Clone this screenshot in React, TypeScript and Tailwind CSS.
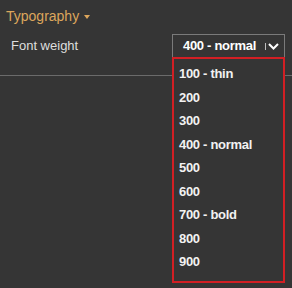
import React from 'react';

const weights = [
  '100 - thin',
  '200',
  '300',
  '400 - normal',
  '500',
  '600',
  '700 - bold',
  '800',
  '900',
];

const App = () => {
  return (
    <div className="relative w-[292px] h-[288px] bg-[#353535] overflow-hidden font-['Liberation_Sans',Arial,sans-serif]">
      {/* Section header */}
      <div className="flex items-center pl-[6px] pt-[6px] h-[20px] box-content text-[14px] text-[#dca65c]">
        <span>Typography</span>
        <span className="ml-[5px] mt-[1px] w-0 h-0 border-l-[3px] border-r-[3px] border-t-[4px] border-l-transparent border-r-transparent border-t-[#dca65c]" />
      </div>

      {/* Font weight row */}
      <div className="flex items-center justify-between pl-[11px] pr-[7px] mt-[8px]">
        <span className="text-[13px] text-[#dedede]">Font weight</span>
        <div className="relative w-[113px]">
          <div className="flex items-center h-[24px] border border-[#7a7a7a] pl-[10px] pr-[5px]">
            <span className="text-[13px] font-bold tracking-[-0.3px] text-white">400 - normal</span>
            <span className="ml-auto w-px h-[7px] bg-[#bdbdbd]" />
            <svg width="11" height="7" viewBox="0 0 11 7" className="ml-[2px]">
              <polyline points="1,1 5.5,5.5 10,1" fill="none" stroke="#ffffff" strokeWidth="2" />
            </svg>
          </div>

          {/* Open dropdown */}
          <div className="absolute left-0 right-0 top-[23px] z-10 bg-[#353535] border-2 border-[#d21f24] pt-[3px] pb-[7px]">
            {weights.map((w) => (
              <div key={w} className="h-[23.5px] flex items-center pl-[5px] text-[13px] font-bold tracking-[-0.3px] text-[#f2f2f2]">
                {w}
              </div>
            ))}
          </div>
        </div>
      </div>

      {/* Separator */}
      <div className="mt-[17px] h-px bg-[#6b6b6b]" />
    </div>
  );
};

export default App;
